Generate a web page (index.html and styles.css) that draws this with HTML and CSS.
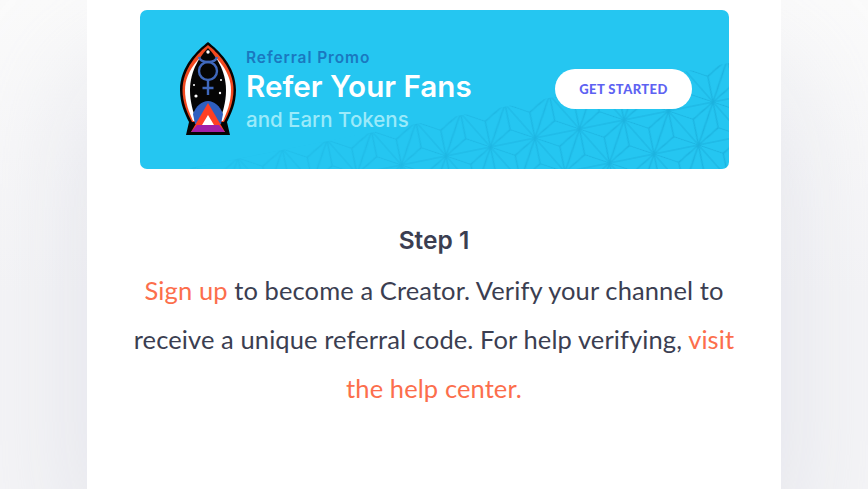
FILE: index.html
```html
<!DOCTYPE html>
<html lang="en">
<head>
<meta charset="utf-8">
<title>Referral Promo</title>
<link rel="stylesheet" href="styles.css">
</head>
<body>
<main class="card">
  <section class="banner">
    <svg class="pattern" width="589" height="159" viewBox="0 0 589 159" aria-hidden="true">
      <defs>
        <pattern id="asanoha" patternUnits="userSpaceOnUse" width="100" height="100" patternTransform="matrix(.445 -.09 .30 .34 395 128)">
          <g fill="none" stroke="#1aaedb" stroke-width="2.2">
            <path d="M0 0H100M0 100H100M0 0V100M100 0V100M100 0L0 100"/>
            <path d="M0 0L33.3 33.3M100 0L33.3 33.3M0 100L33.3 33.3M100 100L66.7 66.7M100 0L66.7 66.7M0 100L66.7 66.7"/>
          </g>
        </pattern>
        <linearGradient id="fade" x1="0" x2="1" y1="0" y2="0">
          <stop offset="0" stop-color="#fff" stop-opacity=".15"/>
          <stop offset=".5" stop-color="#fff" stop-opacity=".6"/>
          <stop offset="1" stop-color="#fff" stop-opacity=".9"/>
        </linearGradient>
        <mask id="fademask"><rect width="589" height="159" fill="url(#fade)"/></mask>
      </defs>
      <polygon points="589,53 50,158 50,159 589,159" fill="url(#asanoha)" mask="url(#fademask)"/>
    </svg>
    <svg class="logo" width="58" height="94" viewBox="0 0 58 94" aria-hidden="true">
      <path d="M30 0C20 8 2 24 2 48C2 62 7 72 11 80L8 93H52L49 80C53 72 58 62 58 48C58 24 40 8 30 0Z" fill="#050505"/>
      <path d="M30 3C21 10 4.5 26 4.5 48C4.5 60 9 71 14 80H46C51 71 55.5 60 55.5 48C55.5 26 39 10 30 3Z" fill="#f2491f"/>
      <path d="M30 8C22 15 7 29 7 48C7 60 11 70 15 79H45C49 70 53 60 53 48C53 29 38 15 30 8Z" fill="#fff"/>
      <path d="M30 6C23 13 12 28 12 48C12 60 15 70 19 80H41C45 70 48 60 48 48C48 28 37 13 30 6Z" fill="#050505"/>
      <path d="M15 72C18 64 24 59 30 59C36 59 42 64 45 72L43 82H17Z" fill="#2f5fbf"/>
      <g fill="none" stroke="#3f68bd" stroke-width="2.4">
        <circle cx="30" cy="29" r="9"/>
        <path d="M21 15C22 19 26 20 30 20C34 20 38 19 39 15"/>
        <path d="M30 38V53M24.5 46H35.5"/>
      </g>
      <g fill="#fff">
        <circle cx="30" cy="10" r="1.7"/>
        <circle cx="16" cy="43" r="1"/>
        <circle cx="18" cy="54" r="1.6"/>
        <circle cx="43" cy="38" r="1"/>
        <circle cx="42" cy="51" r="1.2"/>
      </g>
      <path d="M30 61L47 90H13Z" fill="#ff3f24"/>
      <path d="M13 90L19 83H41L47 90Z" fill="#a11fa8"/>
      <path d="M30 73L36 83H24Z" fill="#fff"/>
    </svg>
    <div class="promo">
      <div class="promo-kicker">Referral Promo</div>
      <div class="promo-title">Refer Your Fans</div>
      <div class="promo-sub">and Earn Tokens</div>
    </div>
    <a class="promo-button">GET STARTED</a>
  </section>
  <section class="step">
    <h2 class="step-title">Step 1</h2>
    <p class="step-text"><a class="link">Sign up</a> to become a Creator. Verify your channel to receive a unique referral code. For help verifying, <a class="link">visit the help center.</a></p>
  </section>
</main>
</body>
</html>
```
FILE: styles.css
```css
html, body {
  margin: 0;
  height: 100%;
}
body {
  overflow: hidden;
  background: linear-gradient(to bottom, #fbfbfb, #f5f5f7 60%);
}
.card {
  width: 694px;
  height: 489px;
  margin-left: 87px;
  padding: 10px 53px 0;
  box-sizing: border-box;
  background: #fff;
  box-shadow: 0 70px 120px rgba(205, 208, 222, .5);
}
.banner {
  position: relative;
  display: flex;
  align-items: center;
  width: 589px;
  height: 159px;
  box-sizing: border-box;
  padding-left: 38px;
  border-radius: 7px;
  overflow: hidden;
  background: #25c6f1;
}
.pattern {
  position: absolute;
  left: 0;
  top: 0;
}
.logo {
  position: relative;
  flex: none;
  margin-top: -2px;
}
.promo {
  position: relative;
  margin: 2px 0 0 10px;
  flex: 1;
  font-family: "Inter", sans-serif;
}
.promo-kicker {
  font-size: 15.5px;
  line-height: 20px;
  font-weight: 600;
  letter-spacing: .9px;
  color: #1a78c0;
}
.promo-title {
  font-size: 29.6px;
  line-height: 38px;
  font-weight: 600;
  color: #fff;
  position: relative;
  top: -1px;
}
.promo-sub {
  font-size: 20.5px;
  line-height: 28px;
  font-weight: 500;
  color: #9beafa;
}
.promo-button {
  position: relative;
  top: -1px;
  flex: none;
  width: 137px;
  height: 40px;
  margin-right: 37px;
  border-radius: 20px;
  background: #fff;
  color: #5d62f2;
  font: 900 13px/40px "Lato", sans-serif;
  letter-spacing: .4px;
  text-align: center;
}
.step {
  margin-top: 52px;
  text-align: center;
  color: #3b3e51;
}
.step-title {
  margin: 0;
  font: 600 24.5px/38px "Inter", sans-serif;
}
.step-text {
  margin: 7px -8px 0;
  font: 400 25.5px/49px "Lato", sans-serif;
  letter-spacing: .1px;
}
.link {
  color: #fc6e4c;
}
```
